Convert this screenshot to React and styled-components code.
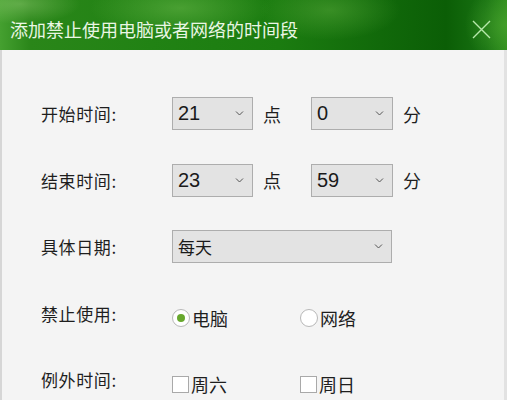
import React, { useState } from 'react';
import styled, { createGlobalStyle } from 'styled-components';

const Global = createGlobalStyle`
  html, body {
    margin: 0;
    padding: 0;
    width: 507px;
    height: 400px;
    overflow: hidden;
    background: #f4f4f4;
  }
  * { box-sizing: border-box; }
`;

const FONT = `"Noto Sans CJK SC", "Noto Sans", "Liberation Sans", sans-serif`;

const Dialog = styled.div`
  width: 507px;
  height: 400px;
  display: flex;
  flex-direction: column;
  font-family: ${FONT};
  color: #1e1e1e;
  background: #f4f4f4;
`;

const TitleBar = styled.div`
  height: 50px;
  flex: none;
  display: flex;
  align-items: center;
  justify-content: space-between;
  padding: 8px 16px 0 10px;
  background:
    radial-gradient(ellipse 60px 20px at 20px 4px, rgba(140, 200, 110, 0.5), transparent),
    radial-gradient(ellipse 90px 30px at 180px 8px, rgba(100, 180, 70, 0.6), transparent),
    radial-gradient(ellipse 70px 30px at 330px 10px, rgba(90, 170, 60, 0.5), transparent),
    radial-gradient(ellipse 40px 40px at 505px 25px, rgba(80, 170, 50, 0.6), transparent),
    linear-gradient(90deg, #45a030 0%, #2a8619 6%, #218214 30%, #1b7c10 55%, #11690a 75%, #0b5e06 88%, #187212 96%, #2c8c1c 100%);
`;

const Title = styled.div`
  font-size: 18px;
  color: #eaf6e4;
`;

const Body = styled.div`
  flex: 1;
  border-left: 2px solid #d6d6d6;
  border-right: 3px solid #e2e2e2;
  padding: 47px 0 0 39px;
  display: flex;
  flex-direction: column;
  gap: 33.5px;
`;

const Row = styled.div`
  display: flex;
  align-items: center;
  height: 33px;
`;

const Label = styled.div`
  width: 131px;
  font-size: 17px;
  letter-spacing: 0.6px;
  flex: none;
`;

const Controls = styled.div`
  display: flex;
  align-items: center;
  margin-top: ${p => p.$drop || 0}px;
`;

const SelectBox = styled.div`
  width: ${p => p.$w}px;
  height: 33px;
  border: 1px solid #adadad;
  background: #e3e3e3;
  display: flex;
  align-items: center;
  justify-content: space-between;
  padding: 0 8px 0 5px;
  color: #1a1a1a;
`;

const SelectText = styled.span`
  font-family: ${p => (p.$cjk ? FONT : `"Liberation Sans", ${FONT}`)};
  font-size: ${p => (p.$cjk ? 17 : 20)}px;
`;

const Unit = styled.span`
  font-size: 18px;
  width: 58px;
  padding-left: 10px;
`;

const Option = styled.label`
  display: flex;
  align-items: center;
  width: ${p => p.$w || 128}px;
  font-size: 18px;
  gap: 2px;
  cursor: pointer;
`;

const RadioDot = styled.span`
  width: 18px;
  height: 18px;
  border-radius: 50%;
  border: 1px solid #b8b8b8;
  background: #fff;
  display: flex;
  align-items: center;
  justify-content: center;
  &::after {
    content: '';
    width: 8px;
    height: 8px;
    border-radius: 50%;
    background: ${p => (p.$on ? '#68a82e' : 'transparent')};
  }
`;

const Check = styled.span`
  width: 17px;
  height: 17px;
  border: 1px solid #a9a9a9;
  background: #fff;
`;

const Chevron = () => (
  <svg width="9" height="5" viewBox="0 0 9 5">
    <path d="M1 0.5 L4.5 4 L8 0.5" fill="none" stroke="#555" strokeWidth="1" />
  </svg>
);

const CloseIcon = () => (
  <svg width="19" height="19" viewBox="0 0 19 19">
    <path d="M1 1 L18 18 M18 1 L1 18" stroke="#b6e8aa" strokeWidth="1.4" />
  </svg>
);

const Select = ({ w, value, cjk }) => (
  <SelectBox $w={w}>
    <SelectText $cjk={cjk}>{value}</SelectText>
    <Chevron />
  </SelectBox>
);

export default function App() {
  const [target, setTarget] = useState('pc');
  return (
    <Dialog>
      <Global />
      <TitleBar>
        <Title>添加禁止使用电脑或者网络的时间段</Title>
        <CloseIcon />
      </TitleBar>
      <Body>
        <Row>
          <Label>开始时间:</Label>
          <Controls>
            <Select w={81} value="21" />
            <Unit>点</Unit>
            <Select w={82} value="0" />
            <Unit>分</Unit>
          </Controls>
        </Row>
        <Row>
          <Label>结束时间:</Label>
          <Controls>
            <Select w={81} value="23" />
            <Unit>点</Unit>
            <Select w={82} value="59" />
            <Unit>分</Unit>
          </Controls>
        </Row>
        <Row>
          <Label>具体日期:</Label>
          <Controls>
            <Select w={220} value="每天" cjk />
          </Controls>
        </Row>
        <Row>
          <Label>禁止使用:</Label>
          <Controls $drop={10}>
            <Option onClick={() => setTarget('pc')}>
              <RadioDot $on={target === 'pc'} />
              电脑
            </Option>
            <Option onClick={() => setTarget('net')}>
              <RadioDot $on={target === 'net'} />
              网络
            </Option>
          </Controls>
        </Row>
        <Row>
          <Label>例外时间:</Label>
          <Controls $drop={9}>
            <Option>
              <Check />
              周六
            </Option>
            <Option>
              <Check />
              周日
            </Option>
          </Controls>
        </Row>
      </Body>
    </Dialog>
  );
}
